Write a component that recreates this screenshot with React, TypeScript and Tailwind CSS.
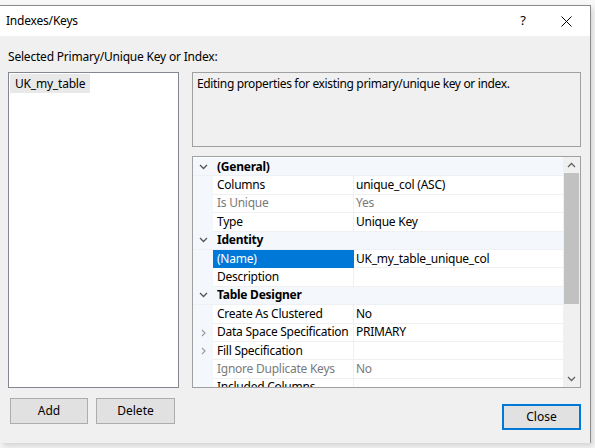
import React from 'react'

type Row =
  | { kind: 'cat'; label: string }
  | { kind: 'prop'; name: string; value?: string; dim?: boolean; expand?: boolean; selected?: boolean }

const rows: Row[] = [
  { kind: 'cat', label: '(General)' },
  { kind: 'prop', name: 'Columns', value: 'unique_col (ASC)' },
  { kind: 'prop', name: 'Is Unique', value: 'Yes', dim: true },
  { kind: 'prop', name: 'Type', value: 'Unique Key' },
  { kind: 'cat', label: 'Identity' },
  { kind: 'prop', name: '(Name)', value: 'UK_my_table_unique_col', selected: true },
  { kind: 'prop', name: 'Description' },
  { kind: 'cat', label: 'Table Designer' },
  { kind: 'prop', name: 'Create As Clustered', value: 'No' },
  { kind: 'prop', name: 'Data Space Specification', value: 'PRIMARY', expand: true },
  { kind: 'prop', name: 'Fill Specification', expand: true },
  { kind: 'prop', name: 'Ignore Duplicate Keys', value: 'No', dim: true },
  { kind: 'prop', name: 'Included Columns' },
]

function ChevronDown({ className = '' }: { className?: string }) {
  return (
    <svg width="9" height="6" viewBox="0 0 9 6" className={className}>
      <path d="M1 1l3.5 3.5L8 1" fill="none" stroke="currentColor" strokeWidth="1.3" />
    </svg>
  )
}

function ChevronRight() {
  return (
    <svg width="5" height="8" viewBox="0 0 5 8">
      <path d="M1 1l3 3-3 3" fill="none" stroke="#9a9a9a" strokeWidth="1.1" />
    </svg>
  )
}

function PropRow({ row }: { row: Row }) {
  if (row.kind === 'cat') {
    return (
      <div className="flex h-[18.4px] bg-[#f4f7fc] border-b border-[#eef0f3]">
        <div className="w-[20px] flex items-center justify-center text-[#555]">
          <ChevronDown />
        </div>
        <div className="flex items-center pl-[4px] font-bold">{row.label}</div>
      </div>
    )
  }
  return (
    <div className="flex h-[18.4px]">
      <div className="w-[20px] bg-[#f4f7fc] flex items-center justify-center">
        {row.expand && <ChevronRight />}
      </div>
      <div
        className={
          row.selected
            ? 'w-[141px] flex items-center pl-[4px] bg-[#0078d7] text-white border-b border-[#0078d7]'
            : 'w-[141px] flex items-center pl-[4px] bg-white border-b border-r border-[#f0f0f0] ' +
              (row.dim ? 'text-[#7a7a7a]' : '')
        }
      >
        <span className="whitespace-nowrap">{row.name}</span>
      </div>
      <div
        className={
          'flex-1 flex items-center pl-[2px] bg-white border-b border-[#f0f0f0] ' +
          (row.dim ? 'text-[#7a7a7a]' : '')
        }
      >
        {row.value}
      </div>
    </div>
  )
}

export default function App() {
  return (
    <div
      className="w-[595px] h-[448px] bg-[#f7f7f7] overflow-hidden text-[12px] text-black"
      style={{ fontFamily: '"Noto Sans", "Open Sans", sans-serif' }}
    >
      <div className="mt-[5px] w-[591px] h-[438px] border-t border-r border-[#8a8a8a] bg-[#f0f0f0] flex flex-col shadow-[2px_3px_6px_rgba(0,0,0,0.15)]">
        {/* Title bar */}
        <div className="h-[30px] bg-white flex items-center pl-[6px] shrink-0">
          <span className="flex-1 tracking-[-0.2px]">Indexes/Keys</span>
          <span className="w-[20px] text-center mr-[28px] text-[13px]">?</span>
          <svg width="11" height="11" viewBox="0 0 11 11" className="mr-[18px]">
            <path d="M0.5 0.5l10 10M10.5 0.5l-10 10" stroke="#000" strokeWidth="1" />
          </svg>
        </div>

        {/* Body */}
        <div className="flex-1 flex flex-col pl-[8px] pr-[9px]">
          <div className="h-[36px] flex items-end pb-[6px] tracking-[-0.2px]">
            Selected Primary/Unique Key or Index:
          </div>

          <div className="flex gap-[13px] h-[316px]">
            {/* Key list */}
            <div className="w-[171px] bg-white border border-[#828790] p-[1px]">
              <div className="inline-block bg-[#e9e9e9] px-[5px] h-[19px] leading-[19px] tracking-[-0.2px]">
                UK_my_table
              </div>
            </div>

            {/* Right side */}
            <div className="flex-1 flex flex-col gap-[9px]">
              <div className="h-[75px] border border-[#a0a0a0] px-[4px] pt-[2px] tracking-[-0.35px]">
                Editing properties for existing primary/unique key or index.
              </div>

              <div className="flex-1 border border-[#a0a0a0] bg-white flex overflow-hidden tracking-[-0.25px]">
                <div className="flex-1 flex flex-col pt-[1px]">
                  {rows.map((r, i) => (
                    <PropRow key={i} row={r} />
                  ))}
                </div>
                {/* Scrollbar */}
                <div className="w-[17px] bg-[#f0f0f0] flex flex-col">
                  <div className="h-[16px] flex items-center justify-center text-[#606060]">
                    <ChevronDown className="rotate-180" />
                  </div>
                  <div className="h-[131px] mx-[1px] bg-[#c1c1c1]" />
                  <div className="flex-1" />
                  <div className="h-[16px] flex items-center justify-center text-[#606060]">
                    <ChevronDown />
                  </div>
                </div>
              </div>
            </div>
          </div>

          {/* Buttons */}
          <div className="flex items-start mt-[10px]">
            <button className="ml-[2px] w-[78px] h-[26px] bg-[#e1e1e1] border border-[#adadad]">Add</button>
            <button className="ml-[8px] w-[79px] h-[26px] bg-[#e1e1e1] border border-[#adadad]">Delete</button>
            <div className="flex-1" />
            <button className="mt-[6px] w-[79px] h-[26px] bg-[#e1e1e1] border-2 border-[#0078d7]">Close</button>
          </div>
        </div>
      </div>
    </div>
  )
}
